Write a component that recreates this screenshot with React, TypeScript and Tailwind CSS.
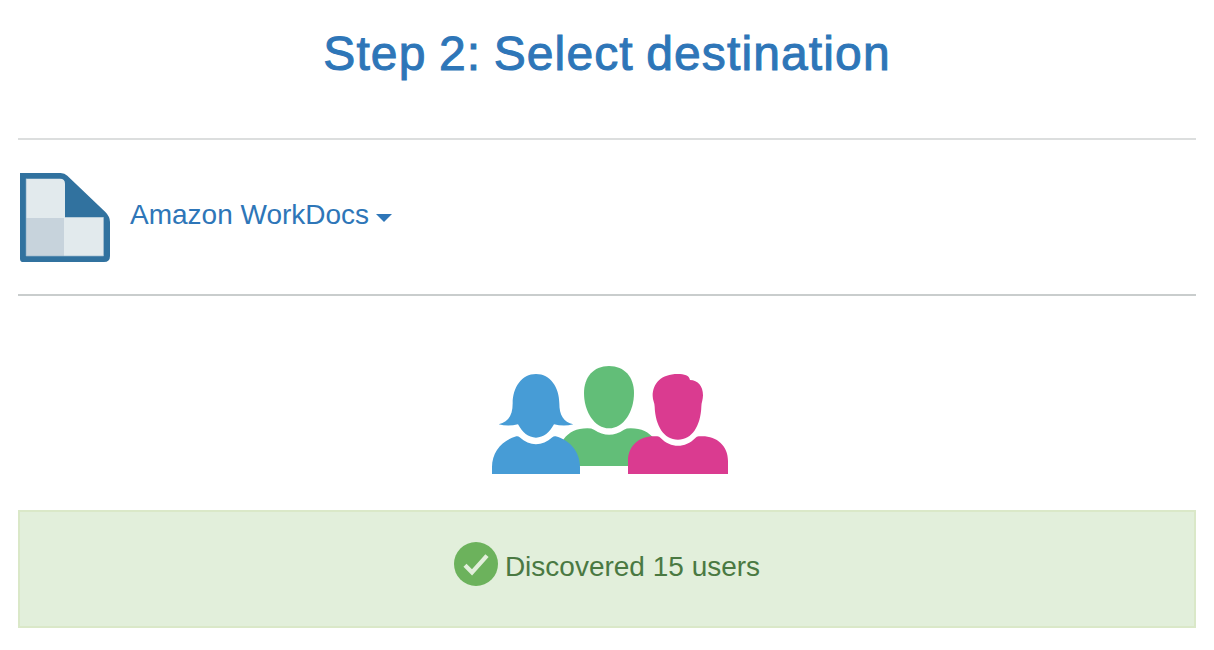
function DocumentLogo() {
  return (
    <svg className="h-[89px] w-[90px] shrink-0" viewBox="0 0 270 267" aria-hidden="true">
      <path d="M0 0H122Q134 0 142 8L256 117Q270 131 270 147V249Q270 267 252 267H10Q0 267 0 257Z" fill="#31729f" />
      <path d="M18 17H120Q135 17 135 32V133H251V249H18Z" fill="#e2eaed" />
      <path d="M18 135H132V249H18Z" fill="#c7d3dc" />
      <path d="M18.5 17V249H250.500V133" fill="none" stroke="#99b7cc" strokeWidth="2" />
    </svg>
  );
}

function UsersIllustration() {
  return (
    <svg className="h-[108px] w-[236px]" viewBox="0 0 708 324" aria-hidden="true">
      <g fill="#62be78">
        <path d="M351 0C304 0 276 34 276 81C276 138 308 187 351 187C394 187 426 138 426 81C426 34 398 0 351 0Z" />
        <path d="M190 300C195 235 221 187 286 187Q299 187 306 191C337 211 366 211 396 191Q403 187 416 187C481 187 507 235 512 300Z" />
      </g>
      <g fill="#479cd6">
        <path d="M132 24C89 24 62 64 62 112C62 147 50 168 20 175Q48 182 78 175C91 199 109 215 132 215C155 215 173 199 186 175Q216 182 244 175C214 168 202 147 202 112C202 64 175 24 132 24Z" />
        <path d="M0 324V303C0 257 31 222 73 211Q79 210 83 214C113 242 151 242 181 214Q185 210 191 211C233 222 264 257 264 303V324Z" />
      </g>
      <g fill="#da3b90">
        <path d="M557 24C508 24 482 52 482 90C482 103 488 111 488 122C490 179 516 221 558 221C600 221 626 179 628 122C628 111 633 101 633 88C633 60 618 43 594 42C592 28 577 24 557 24Z" />
        <path d="M408 324V285C408 240 441 211 485 211H496Q502 211 506 216C536 247 580 247 610 216Q614 211 620 211H631C675 211 708 240 708 285V324Z" />
      </g>
    </svg>
  );
}

function CheckIcon() {
  return (
    <svg className="h-11 w-11 shrink-0" viewBox="0 0 132 132" aria-hidden="true">
      <circle cx="66" cy="66" r="66" fill="#6cb25c" />
      <path d="M33 70L54 91L99 41" fill="none" stroke="#e2efdb" strokeWidth="13" />
    </svg>
  );
}

export default function App() {
  return (
    <main className="h-[650px] bg-white px-[18px] font-['Liberation_Sans',Arial,sans-serif]">
      <header className="flex h-[138px] justify-center pt-[26px]">
        <h1 className="whitespace-nowrap text-[48px] leading-[56px] tracking-[1.12px] [word-spacing:-2px] text-[#2e76b8] [-webkit-text-stroke:1px_#2e76b8]">
          Step 2: Select destination
        </h1>
      </header>
      <section className="flex h-[158px] items-start border-t-2 border-b-2 border-t-[#dcdede] border-b-[#c9cdcd] pt-[33px] pl-[2px]">
        <DocumentLogo />
        <button className="ml-5 mt-[26px] flex items-center text-[28px] leading-8 text-[#2e76b8]">
          <span className="whitespace-nowrap">Amazon WorkDocs</span>
          <svg className="ml-[7px] mt-[5px] h-2 w-4" viewBox="0 0 16 8" aria-hidden="true">
            <path d="M0 0H16L8 8Z" fill="currentColor" />
          </svg>
        </button>
      </section>
      <div className="flex h-[214px] justify-center pt-[70px] pl-[6px]">
        <UsersIllustration />
      </div>
      <div className="flex h-[118px] items-start justify-center border-2 border-[#dae8c8] bg-[#e2efdb] pt-[30px]">
        <CheckIcon />
        <p className="ml-[7px] mt-[9px] whitespace-nowrap text-[28px] leading-8 text-[#4a7942]">
          Discovered 15 users
        </p>
      </div>
    </main>
  );
}
